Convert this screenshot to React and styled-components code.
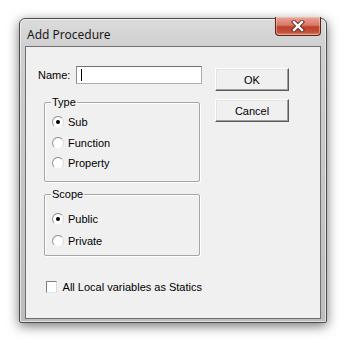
import React from 'react';
import styled, { createGlobalStyle } from 'styled-components';

const GlobalStyle = createGlobalStyle`
  html, body {
    margin: 0;
    padding: 0;
    background: #ffffff;
  }
  body {
    width: 360px;
    height: 343px;
    overflow: hidden;
  }
`;

function App() {
  return (
    <>
      <GlobalStyle />
      <Page>
        <Window>
          <TitleBar>
            <Title>Add Procedure</Title>
            <CloseButton aria-label="Close">
              <svg width="16" height="12" viewBox="0 0 16 12">
                <path d="M4 2 L12 10 M12 2 L4 10" stroke="#5a2a22" strokeWidth="4.2" strokeLinecap="square" />
                <path d="M4 2 L12 10 M12 2 L4 10" stroke="#ffffff" strokeWidth="2.4" strokeLinecap="square" />
              </svg>
            </CloseButton>
          </TitleBar>
          <Client>
            <LeftColumn>
              <NameRow>
                <Label>Name:</Label>
                <TextBox>
                  <Caret />
                </TextBox>
              </NameRow>

              <GroupBox $top={18} $height={80} $padTop={13} $gap={8.5}>
                <Caption>Type</Caption>
                <Radio checked label="Sub" />
                <Radio label="Function" />
                <Radio label="Property" />
              </GroupBox>

              <GroupBox $top={12} $height={62} $padTop={18} $gap={10}>
                <Caption>Scope</Caption>
                <Radio checked label="Public" />
                <Radio label="Private" />
              </GroupBox>

              <CheckRow>
                <CheckBox />
                <Label>All Local variables as Statics</Label>
              </CheckRow>
            </LeftColumn>

            <RightColumn>
              <PushButton>OK</PushButton>
              <PushButton>Cancel</PushButton>
            </RightColumn>
          </Client>
        </Window>
      </Page>
    </>
  );
}

function Radio({ checked, label }) {
  return (
    <RadioRow>
      <RadioCircle>{checked && <RadioDot />}</RadioCircle>
      <Label>{label}</Label>
    </RadioRow>
  );
}

export default App;

const Page = styled.div`
  padding: 18px 0 0 19px;
`;

const Window = styled.div`
  width: 308px;
  height: 305px;
  box-sizing: border-box;
  border: 1px solid #4e4e4e;
  border-radius: 6px 6px 2px 2px;
  background: linear-gradient(to bottom, #dcdcdc 0px, #cfcfcf 28px, #bdbdbd 100%);
  box-shadow: 0 3px 12px rgba(0, 0, 0, 0.55), inset 0 0 0 1px rgba(255, 255, 255, 0.55);
  display: flex;
  flex-direction: column;
  padding: 0 5px 3px 5px;
`;

const TitleBar = styled.div`
  height: 27px;
  display: flex;
  align-items: flex-start;
`;

const Title = styled.div`
  font-family: 'Noto Sans', 'Liberation Sans', sans-serif;
  font-size: 12px;
  color: #1a1a1a;
  margin: 7px 0 0 2px;
`;

const CloseButton = styled.div`
  margin-left: auto;
  margin-top: -2px;
  width: 46px;
  height: 19px;
  box-sizing: border-box;
  border: 1px solid #5b2319;
  border-top: none;
  border-radius: 0 0 4px 4px;
  background: linear-gradient(to bottom, #e9a795 0%, #d9786a 45%, #c0402c 55%, #c4503a 85%, #dd8a72 100%);
  box-shadow: inset 0 0 0 1px rgba(255, 220, 210, 0.45);
  display: flex;
  align-items: center;
  justify-content: center;
`;

const Client = styled.div`
  flex: 1;
  background: #f0f0f0;
  border: 1px solid #6f6f6f;
  display: flex;
  align-items: flex-start;
  padding: 19px 0 0 12px;
`;

const LeftColumn = styled.div`
  width: 164px;
  display: flex;
  flex-direction: column;
`;

const Label = styled.span`
  font-family: 'Liberation Sans', Arial, sans-serif;
  font-size: 11px;
  color: #000000;
  white-space: nowrap;
`;

const NameRow = styled.div`
  height: 18px;
  display: flex;
  align-items: center;
  justify-content: space-between;
`;

const TextBox = styled.div`
  width: 126px;
  height: 18px;
  box-sizing: border-box;
  background: #ffffff;
  border: 1px solid #abadb3;
  border-top-color: #707070;
  border-left-color: #8e8e8e;
  display: flex;
  align-items: center;
  padding-left: 4px;
`;

const Caret = styled.div`
  width: 1px;
  height: 12px;
  background: #000000;
`;

const GroupBox = styled.div`
  position: relative;
  margin: ${({ $top }) => $top}px 0 0 6px;
  width: 156px;
  height: ${({ $height }) => $height}px;
  box-sizing: border-box;
  border: 1px solid #a6a6a6;
  box-shadow: 1px 1px 0 #ffffff, inset 1px 1px 0 #ffffff;
  border-radius: 2px;
  padding: ${({ $padTop }) => $padTop}px 0 0 7px;
  display: flex;
  flex-direction: column;
  gap: ${({ $gap }) => $gap}px;
`;

const Caption = styled.span`
  position: absolute;
  top: -8px;
  left: 6px;
  padding: 0 1px;
  background: #f0f0f0;
  font-family: 'Liberation Sans', Arial, sans-serif;
  font-size: 11px;
  line-height: 14px;
  color: #000000;
`;

const RadioRow = styled.div`
  display: flex;
  align-items: center;
  gap: 4px;
  height: 12px;
`;

const RadioCircle = styled.div`
  width: 12px;
  height: 12px;
  box-sizing: border-box;
  border-radius: 50%;
  border: 1px solid;
  border-color: #8a8a8a #dcdcdc #f4f4f4 #9a9a9a;
  background: radial-gradient(circle at 60% 60%, #ffffff 55%, #e6e6e6 100%);
  display: flex;
  align-items: center;
  justify-content: center;
`;

const RadioDot = styled.div`
  width: 4px;
  height: 4px;
  border-radius: 50%;
  background: #000000;
`;

const CheckRow = styled.div`
  display: flex;
  align-items: center;
  gap: 6px;
  margin: 25px 0 0 8px;
`;

const CheckBox = styled.div`
  width: 12px;
  height: 12px;
  box-sizing: border-box;
  background: #ffffff;
  border: 1px solid;
  border-color: #808080 #dadada #e8e8e8 #808080;
`;

const RightColumn = styled.div`
  margin: 2px 0 0 13px;
  display: flex;
  flex-direction: column;
  gap: 8px;
`;

const PushButton = styled.div`
  width: 74px;
  height: 23px;
  box-sizing: border-box;
  background: #f0f0f0;
  border: 1px solid;
  border-color: #ffffff #5a5a5a #5a5a5a #ffffff;
  box-shadow: inset -1px -1px 0 #a0a0a0, inset 1px 1px 0 #e3e3e3;
  display: flex;
  align-items: center;
  justify-content: center;
  font-family: 'Liberation Sans', Arial, sans-serif;
  font-size: 11px;
  color: #000000;
`;
